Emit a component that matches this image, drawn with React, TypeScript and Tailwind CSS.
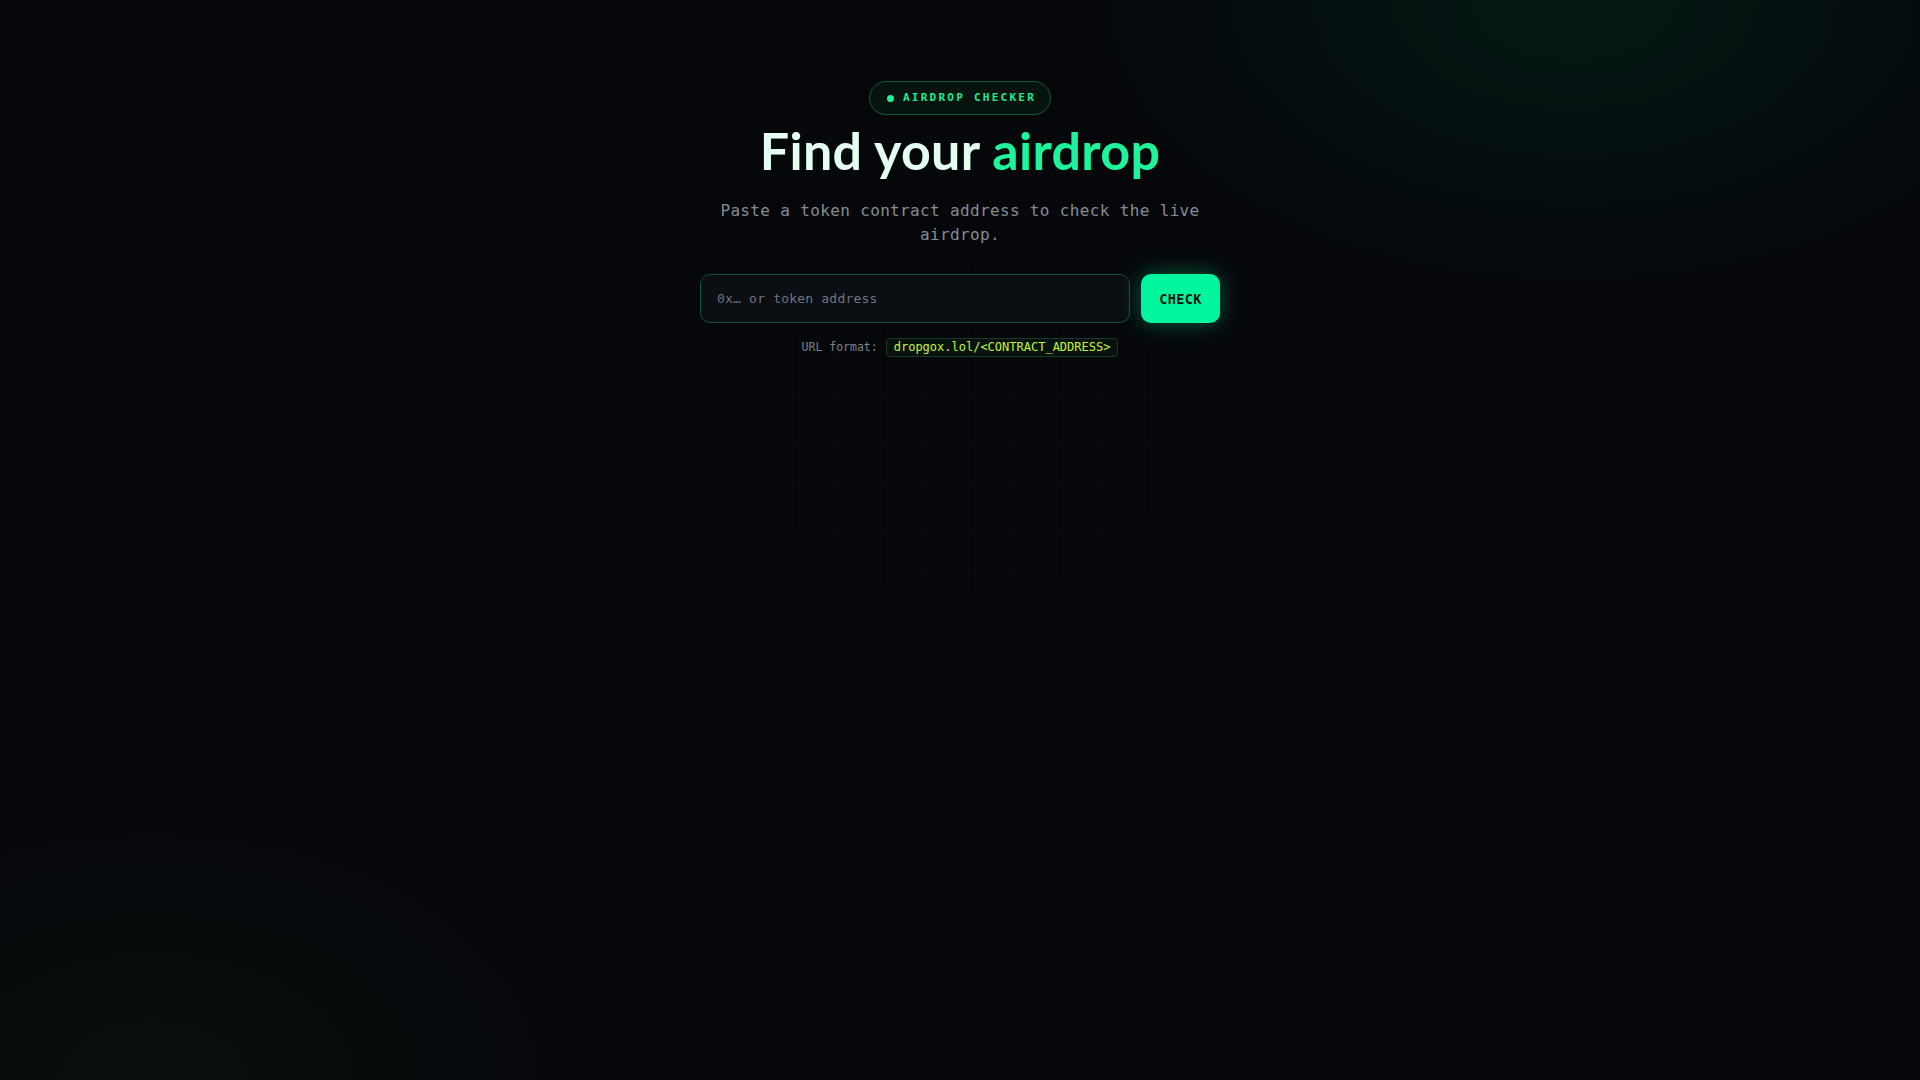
import React from "react";

export default function App() {
  return (
    <div className="relative min-h-screen w-full overflow-hidden bg-[#05070b]">
      {/* background glows */}
      <div className="pointer-events-none absolute inset-0 bg-[radial-gradient(ellipse_700px_420px_at_82%_0%,rgba(0,255,140,0.075),transparent_70%)]" />
      <div className="pointer-events-none absolute inset-0 bg-[radial-gradient(ellipse_600px_380px_at_8%_100%,rgba(170,255,60,0.035),transparent_70%)]" />
      {/* grid */}
      <div className="pointer-events-none absolute inset-0 bg-[linear-gradient(rgba(120,255,190,0.02)_1px,transparent_1px),linear-gradient(90deg,rgba(120,255,190,0.02)_1px,transparent_1px)] bg-[size:44px_44px] [mask-image:radial-gradient(ellipse_480px_380px_at_50%_40%,black_20%,transparent_100%)]" />

      <main className="relative flex flex-col items-center pt-[81px]">
        <div className="flex h-[34px] items-center gap-[9px] rounded-full border border-[#0f5a3a] bg-[#06130e] pl-[17px] pr-[14px]">
          <span className="h-[7px] w-[7px] rounded-full bg-[#1ff094]" />
          <span className="font-['DejaVu_Sans_Mono',monospace] text-[11px] font-bold tracking-[2.25px] text-[#22e88f]">
            AIRDROP CHECKER
          </span>
        </div>

        <h1 className="mt-[7px] font-['Lato',sans-serif] text-[52px] font-bold leading-[1.1] tracking-[0.3px] text-[#e4fff1]">
          Find your <span className="text-[#1cf59b]">airdrop</span>
        </h1>

        <p className="mt-[20px] max-w-[520px] text-center font-['DejaVu_Sans_Mono',monospace] text-[16px] leading-[24px] tracking-[0.35px] text-[#858b94]">
          Paste a token contract address to check the live airdrop.
        </p>

        <form
          className="mt-[27px] flex w-[520px] gap-[11px]"
          onSubmit={(e) => e.preventDefault()}
        >
          <input
            type="text"
            placeholder="0x… or token address"
            className="h-[49px] flex-1 rounded-[10px] border border-[#0f5236] bg-[#0b0e13] px-[16px] font-['DejaVu_Sans_Mono',monospace] text-[13px] tracking-[0.2px] text-[#d1d5db] outline-none placeholder:text-[#6f757e]"
          />
          <button
            type="submit"
            className="h-[49px] w-[79px] rounded-[10px] bg-[#00f59c] font-['DejaVu_Sans_Mono',monospace] text-[13.5px] font-bold tracking-[0.4px] text-[#04140c] shadow-[0_0_22px_rgba(0,245,156,0.35)]"
          >
            CHECK
          </button>
        </form>

        <div className="mt-[15px] flex items-center gap-[8px]">
          <span className="font-['DejaVu_Sans_Mono',monospace] text-[11.5px] text-[#7b818a]">
            URL format:
          </span>
          <code className="rounded-[4px] border border-[#163a28] bg-[#08120d] px-[7px] py-[1px] font-['DejaVu_Sans_Mono',monospace] text-[12px] leading-[15px] text-[#c2f53a]">
            dropgox.lol/&lt;CONTRACT_ADDRESS&gt;
          </code>
        </div>
      </main>
    </div>
  );
}
